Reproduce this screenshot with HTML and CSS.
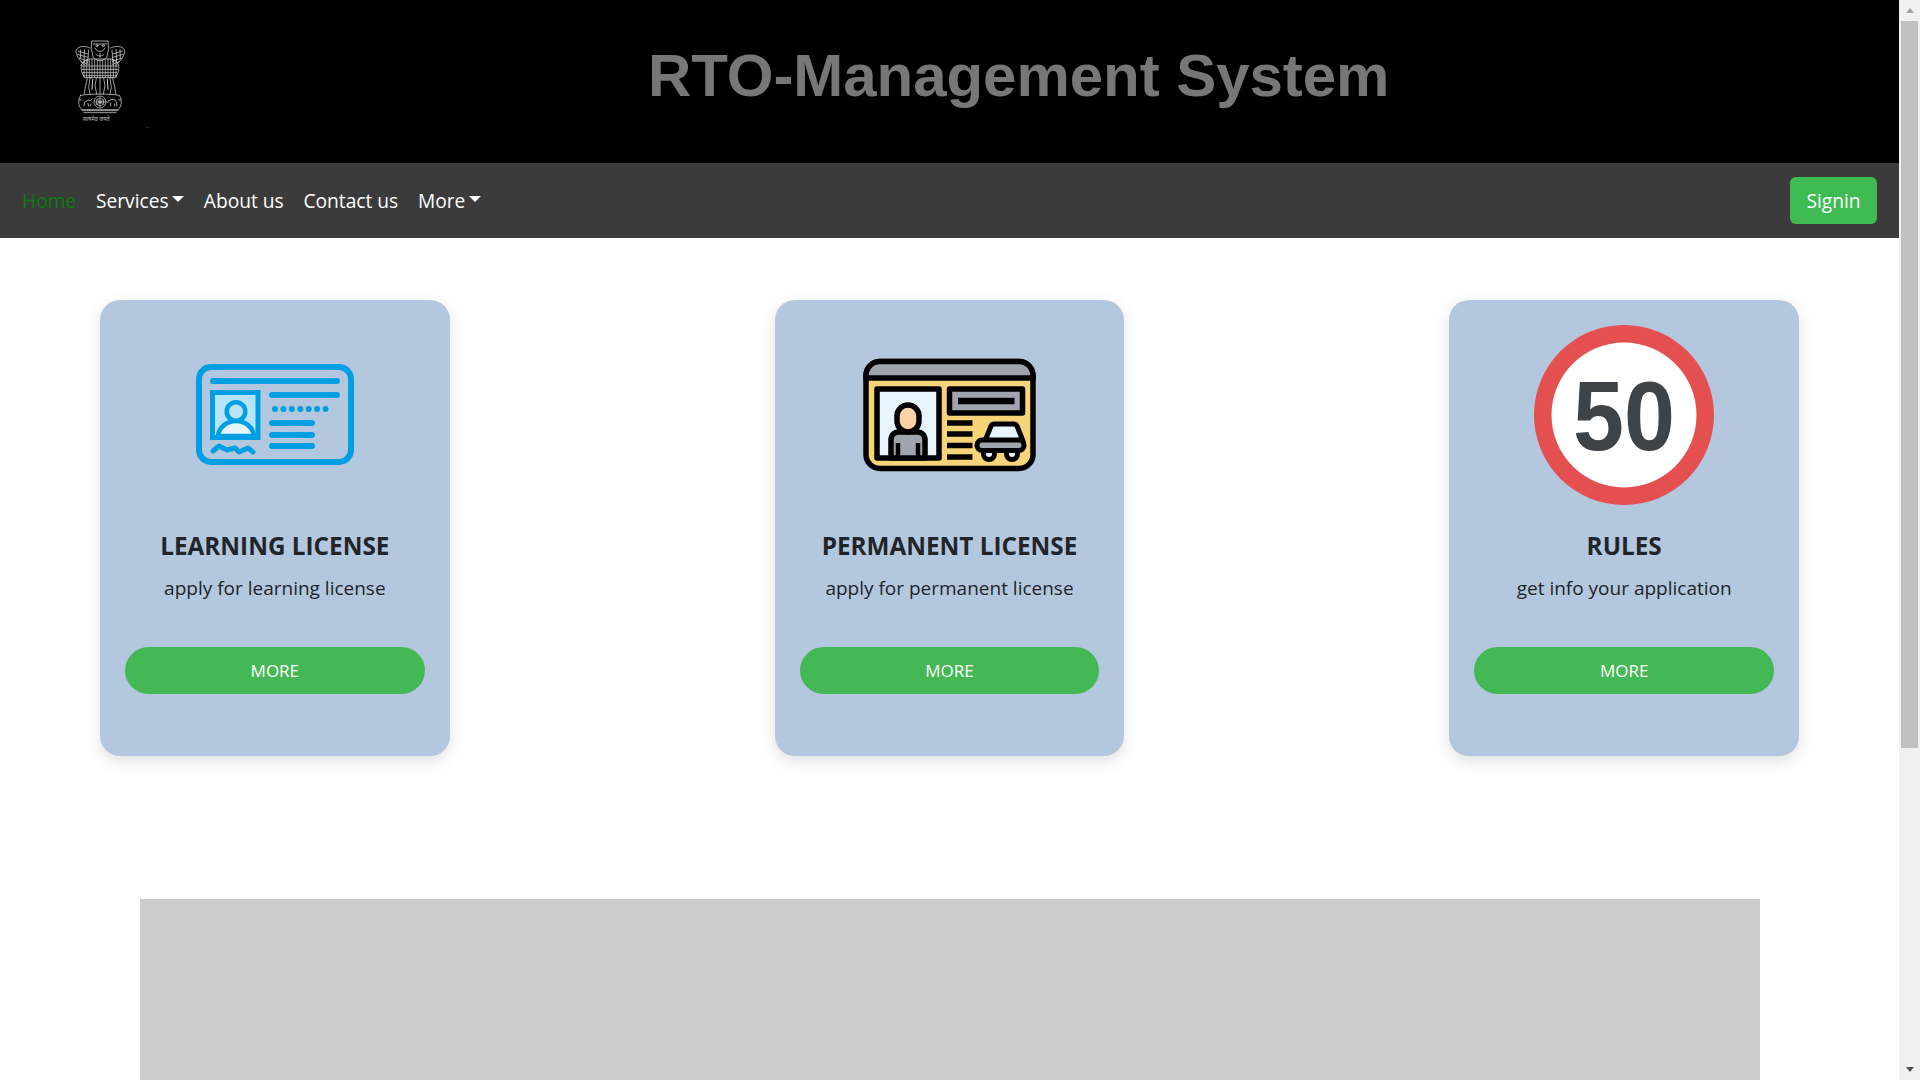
FILE: index.html
```html
<!DOCTYPE html>
<html lang="en">
<head>
<meta charset="utf-8">
<title>RTO-Management System</title>
<link rel="stylesheet" href="styles.css">
</head>
<body>
<div class="page">
  <main class="main">
    <header class="masthead">
      <svg class="emblem" viewBox="0 0 420 360" fill="none" stroke="#d8d8d8" stroke-width="2.200" stroke-linecap="round" stroke-linejoin="round">
        <!-- top lion -->
        <path d="M156 63h48l2 24-6 26-12 8h-16l-12-8-6-26z"/>
        <path d="M160 72h40M165 84c5 14 25 14 30 0M168 103c6 7 18 7 24 0M180 112v-12"/>
        <circle cx="171" cy="77" r="3"/><circle cx="190" cy="77" r="3"/>
        <!-- side lions -->
        <path d="M150 84c-15-8-34-6-41 5-3 8 2 20 10 30l13 15"/>
        <path d="M212 84c15-8 34-6 41 5 3 8-2 20-10 30l-13 15"/>
        <path d="M115 93l28 9M113 103l30 9M118 115l26 8M123 125l22 8M247 93l-28 9M249 103l-30 9M244 115l-26 8M239 125l-22 8"/>
        <path d="M122 90l-1 26M134 88l-2 38M146 90l-3 38M240 90l1 26M228 88l2 38M216 90l3 38"/>
        <!-- chests -->
        <path d="M124 135c-2 14 1 26 10 38h92c9-12 12-24 10-38-4-10-12-15-22-18h-68c-10 3-18 8-22 18z"/>
        <path d="M132 126v46M140 120v54M148 118v56M156 118v56M164 120v54M172 120v54M180 120v54M188 120v54M196 120v54M204 118v56M212 118v56M220 120v54M228 126v46" stroke-dasharray="3 2.500"/>
        <path d="M125 138h110M126 148h108M128 158h104M132 167h96" stroke-dasharray="3 2.500"/>
        <!-- legs -->
        <path d="M142 174l-7 32-2 16M150 174l-4 28 4 20M169 174l-4 24 5 24M180 174v48M191 174l4 24-5 24M210 174l4 28-4 20M218 174l7 32 2 16"/>
        <path d="M158 178l-2 30M202 178l2 30" stroke-width="3"/>
        <!-- abacus -->
        <path d="M122 226c-6 9-8 22-3 34l6 9h110l6-9c5-12 3-25-3-34-30-5-86-5-116 0z"/>
        <path d="M118 240h6M236 240h6M126 272h108M132 278h96"/>
        <circle cx="180" cy="246" r="18"/><circle cx="180" cy="246" r="11"/><circle cx="180" cy="246" r="4"/>
        <path d="M168 238l24 16M168 254l24-16M180 230v32M164 246h32" stroke-width="1.500"/>
        <path d="M132 258l2-12 10-6 8 2 4-5M146 258l-2-8M154 252l-4 6"/>
        <path d="M206 242l10-4 10 2 4 8v10M212 258v-9M224 258v-6M206 242l-3 6"/>
        <circle cx="322" cy="322" r="1.500" fill="#888" stroke="none"/>
      </svg>
      <span class="motto">सत्यमेव जयते</span>
      <h1 class="title">RTO-Management System</h1>
    </header>
    <nav class="navbar">
      <ul class="nav-list">
        <li><a class="nav-link active">Home</a></li>
        <li><a class="nav-link caret">Services</a></li>
        <li><a class="nav-link">About us</a></li>
        <li><a class="nav-link">Contact us</a></li>
        <li><a class="nav-link caret">More</a></li>
      </ul>
      <a class="signin">Signin</a>
    </nav>
    <section class="cards">
      <article class="card">
        <svg class="card-img" viewBox="0 0 180 180" fill="none" stroke="#009fe3" stroke-width="6" stroke-linecap="round">
          <rect x="14" y="42" width="152" height="95" rx="12"/>
          <path d="M28 56h124M87 70h65M87 98h40M87 110h40M87 121h40"/>
          <path d="M90 84h59" stroke-dasharray="0 8.430"/>
          <rect x="27.500" y="67.500" width="45.500" height="45" fill="#b5e4fb" stroke-width="5" stroke-linecap="butt"/>
          <path d="M33 111c1-9 9-15 18-15s17 6 18 15z" fill="#e6f5fd" stroke-width="4.500"/>
          <circle cx="51" cy="86.500" r="9.300" fill="#b5e4fb" stroke-width="4.500"/>
          <path d="M28 126l6-5 8 4 8-2 4 4 9-4 5 4" stroke-width="5" stroke-linejoin="round"/>
        </svg>
        <h2 class="card-title">LEARNING LICENSE</h2>
        <p class="card-text">apply for learning license</p>
        <a class="more">MORE</a>
      </article>
      <article class="card">
        <svg class="card-img" viewBox="0 0 180 180" stroke="#000" stroke-width="5.500" stroke-linejoin="round">
          <rect x="6" y="36.500" width="167" height="107" rx="14" fill="#f7d479"/>
          <path d="M6 53V50.500a14 14 0 0 1 14-14h139a14 14 0 0 1 14 14V53z" fill="#a0a5ad"/>
          <rect x="17" y="64" width="62" height="69" fill="#e8f5ff"/>
          <path d="M31 133v-18c0-5 3-8 8-8h18c5 0 8 3 8 8v18z" fill="#a0a5ad"/>
          <path d="M38 133v-15M58 133v-15" stroke-width="4.500"/>
          <rect x="37" y="80" width="22" height="27" rx="11" fill="#fdd2a5"/>
          <rect x="89.500" y="64" width="73" height="24" fill="#a0a5ad"/>
          <path d="M98 76h56.500" stroke-width="6.500"/>
          <path d="M87 98h25.500M87 109h25.500M87 120.500h25.500M87 132h25.500" stroke-linecap="butt"/>
          <path d="M125 116l6-15q1-2 3-2h20q2 0 3 2l6 15z" fill="#e8f5ff" stroke-width="5"/>
          <circle cx="129" cy="129" r="5.500" fill="#e8f5ff" stroke-width="5"/>
          <circle cx="152" cy="129" r="5.500" fill="#e8f5ff" stroke-width="5"/>
          <rect x="117" y="115" width="47" height="10.500" rx="5" fill="#a0a5ad" stroke-width="5"/>
        </svg>
        <h2 class="card-title">PERMANENT LICENSE</h2>
        <p class="card-text">apply for permanent license</p>
        <a class="more">MORE</a>
      </article>
      <article class="card">
        <svg class="card-img" viewBox="0 0 180 180">
          <circle cx="90" cy="90" r="90" fill="#e44f4f"/>
          <circle cx="90" cy="90" r="72.500" fill="#fff"/>
          <text class="sign-text" x="90" y="124.500" text-anchor="middle" textLength="102" lengthAdjust="spacingAndGlyphs">50</text>
        </svg>
        <h2 class="card-title">RULES</h2>
        <p class="card-text">get info your application</p>
        <a class="more">MORE</a>
      </article>
    </section>
    <div class="banner"></div>
  </main>
  <aside class="scrollbar" aria-hidden="true">
    <span class="arrow-up"></span>
    <span class="track"><span class="thumb"></span></span>
    <span class="arrow-down"></span>
  </aside>
</div>
</body>
</html>
```
FILE: styles.css
```css
* { box-sizing: border-box; }
html, body { margin: 0; height: 100%; overflow: hidden; }
body { font-family: "Open Sans", "Noto Sans", sans-serif; color: #212529; background: #fff; }
.page { display: flex; height: 1080px; }
.main { flex: 1; min-width: 0; overflow: hidden; }

.masthead { position: relative; height: 163px; background: #000; display: flex; align-items: center; padding: 0 0 12px 648px; }
.emblem { position: absolute; left: 40px; top: 20px; width: 140px; height: 120px; }
.motto { position: absolute; left: 83px; top: 116px; width: 36px; font-family: "Noto Sans", "DejaVu Sans", sans-serif; font-size: 5.500px; line-height: 7px; color: #bbb; white-space: nowrap; }
.title { margin: 0; font-family: "Liberation Sans", Arial, sans-serif; font-weight: 700; font-size: 60px; line-height: 1.2; letter-spacing: -.05px; color: #777; white-space: nowrap; }

.navbar { height: 75px; background: #3b3b3b; display: flex; align-items: center; justify-content: space-between; padding: 0 22px; }
.nav-list { display: flex; gap: 19.700px; margin: 0; padding: 0; list-style: none; }
.nav-link { display: flex; align-items: center; font-size: 19.200px; line-height: 28px; color: #fff; }
.nav-link.active { color: #0a7d0a; }
.caret::after { content: ""; margin-left: 3.500px; margin-top: -3px; border-top: 6px solid #fff; border-left: 6px solid transparent; border-right: 6px solid transparent; }
.signin { width: 87px; height: 47px; display: flex; align-items: center; justify-content: center; background: #40bb53; border-radius: 6px; color: #fff; font-size: 19.200px; }

.cards { display: flex; justify-content: space-between; padding: 62px 100px 0; }
.card { width: 349.700px; height: 456px; padding: 25px; background: #b3c8de; border-radius: 20px; box-shadow: 0 5px 15px rgba(0,0,0,.12); display: flex; flex-direction: column; align-items: center; text-align: center; }
.card-img { width: 180px; height: 180px; flex: none; }
.sign-text { font-family: "Liberation Sans", Arial, sans-serif; font-weight: 700; font-size: 98px; fill: #3e4347; }
.card-title { margin: 23px 0 0; font-size: 24.300px; line-height: 36px; font-weight: 700; color: #212529; }
.card-text { margin: 9px 0 0; font-size: 19px; line-height: 30px; color: #212529; }
.more { margin-top: 44px; align-self: stretch; height: 47px; display: flex; align-items: center; justify-content: center; background: #44b854; border-radius: 24px; color: #fff; font-size: 17px; }

.banner { margin: 143px 139px 0 140px; height: 300px; background: #ccc; }

.scrollbar { width: 21px; flex: none; background: #f1f1f1; display: flex; flex-direction: column; align-items: center; }
.arrow-up, .arrow-down { width: 0; border-left: 4.500px solid transparent; border-right: 4.500px solid transparent; }
.arrow-up { height: 0; margin: 8px 0 8px; border-bottom: 5px solid #a3a3a3; }
.arrow-down { height: 0; margin: 8px 0 8px; border-top: 5px solid #505050; }
.track { flex: 1; width: 100%; padding: 0 2px; }
.thumb { display: block; height: 727px; background: #c1c1c1; }
```
